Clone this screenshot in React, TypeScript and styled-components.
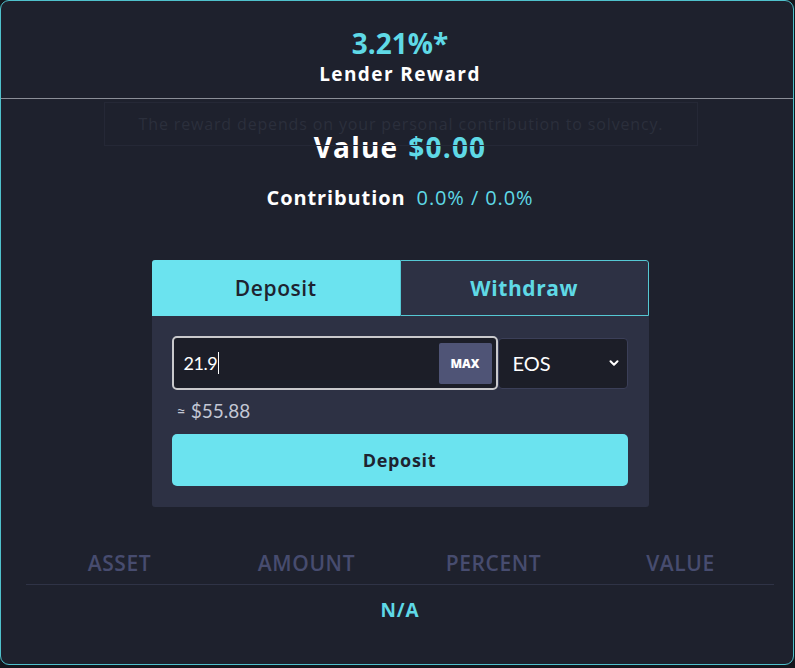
import * as React from "react";
import styled, { createGlobalStyle } from "styled-components";

const Global = createGlobalStyle`
    html, body {
        margin: 0;
        padding: 0;
        background: #14161d;
    }
    body {
        font-family: "Open Sans", "Liberation Sans", sans-serif;
        color: #ffffff;
    }
`;

const Card = styled.div`
    position: relative;
    box-sizing: border-box;
    width: 794px;
    height: 665px;
    padding-left: 6px;
    background: #1e212d;
    border: 1px solid #4fc1cc;
    border-radius: 9px;
    display: flex;
    flex-direction: column;
    align-items: center;
`;

const Header = styled.div`
    box-sizing: border-box;
    width: calc(100% + 6px);
    margin-left: -6px;
    padding-left: 6px;
    height: 98px;
    padding-top: 24px;
    border-bottom: 1px solid #8b8e97;
    display: flex;
    flex-direction: column;
    align-items: center;
`;

const Rate = styled.div`
    font-size: 28px;
    font-weight: 700;
    line-height: 36px;
    color: #5fd9e6;
`;

const HeaderLabel = styled.div`
    font-size: 19px;
    font-weight: 700;
    line-height: 26px;
    letter-spacing: 1.4px;
`;

// tooltip fading out over the value line
const Tooltip = styled.div`
    position: absolute;
    left: 103px;
    top: 101px;
    width: 594px;
    height: 44px;
    box-sizing: border-box;
    border: 1px solid #252836;
    display: flex;
    align-items: center;
    justify-content: center;
    font-size: 16px;
    letter-spacing: 0.85px;
    color: #2b2f3c;
`;

const ValueLine = styled.div`
    margin-top: 30px;
    font-size: 28px;
    font-weight: 700;
    line-height: 36px;
    letter-spacing: 1.2px;
    display: flex;
    gap: 10px;
`;

const Accent = styled.span<{ $weight?: number }>`
    color: #5fd9e6;
    font-weight: ${(p) => p.$weight ?? 700};
`;

const ContributionLine = styled.div`
    margin-top: 19px;
    font-size: 20px;
    font-weight: 700;
    line-height: 28px;
    letter-spacing: 0.9px;
    display: flex;
    gap: 11px;
`;

const Panel = styled.div`
    margin-top: 48px;
    width: 497px;
    background: #2d3144;
    border-radius: 3px;
    overflow: hidden;
`;

const Tabs = styled.div`
    display: grid;
    grid-template-columns: 1fr 1fr;
    height: 56px;
`;

const Tab = styled.div<{ $active?: boolean }>`
    display: flex;
    align-items: center;
    justify-content: center;
    font-size: 21px;
    letter-spacing: 0.6px;
    font-weight: ${(p) => (p.$active ? 600 : 700)};
    background: ${(p) => (p.$active ? "#6be3ef" : "#2d3144")};
    color: ${(p) => (p.$active ? "#1e2330" : "#5fd9e6")};
    border: ${(p) => (p.$active ? "none" : "1px solid #55c8d4")};
    border-radius: ${(p) => (p.$active ? "0" : "0 3px 0 0")};
`;

const Body = styled.div`
    padding: 20px 21px 21px 20px;
    display: flex;
    flex-direction: column;
`;

const InputRow = styled.div`
    display: flex;
    align-items: center;
`;

const AmountBox = styled.div`
    box-sizing: border-box;
    width: 326px;
    height: 54px;
    background: #1c1e28;
    border: 2px solid #c9c9cc;
    border-radius: 5px;
    display: flex;
    align-items: center;
    padding: 0 4px 0 10px;
`;

const AmountText = styled.span`
    flex: 1;
    font-family: Lato, "Liberation Sans", sans-serif;
    font-size: 18px;
    color: #ffffff;
    display: flex;
    align-items: center;
    letter-spacing: -0.5px;
`;

const Caret = styled.span`
    width: 1px;
    height: 22px;
    background: #ffffff;
    margin-left: 1px;
`;

const MaxButton = styled.div`
    width: 53px;
    height: 41px;
    border-radius: 2px;
    background: #4f5476;
    display: flex;
    align-items: center;
    justify-content: center;
    font-size: 12px;
    font-weight: 800;
    color: #ffffff;
`;

const Select = styled.div`
    box-sizing: border-box;
    width: 130px;
    height: 51px;
    background: #1c1e28;
    border: 1px solid #3b3f58;
    border-radius: 4px;
    display: flex;
    align-items: center;
    justify-content: space-between;
    padding: 0 6px 0 14px;
    font-family: Lato, "Liberation Sans", sans-serif;
    font-size: 20px;
    color: #ffffff;
`;

const Approx = styled.div`
    margin-top: 9px;
    padding-left: 5px;
    font-family: Lato, "Liberation Sans", sans-serif;
    font-size: 19px;
    color: #c3c7d4;
    line-height: 24px;
    display: flex;
    align-items: center;
    gap: 5px;
`;

const Tilde = styled.span`
    font-size: 16px;
`;

const ActionButton = styled.div`
    margin-top: 11px;
    height: 52px;
    border-radius: 5px;
    background: #6be3ef;
    display: flex;
    align-items: center;
    justify-content: center;
    font-size: 18px;
    letter-spacing: 0.7px;
    font-weight: 700;
    color: #1e2330;
`;

const Table = styled.div`
    margin-top: 35px;
    width: 748px;
`;

const TableHead = styled.div`
    display: grid;
    grid-template-columns: repeat(4, 1fr);
    height: 42px;
    align-items: center;
    border-bottom: 1px solid #2f3346;
`;

const HeadCell = styled.div`
    text-align: center;
    font-size: 21px;
    font-weight: 600;
    color: #474c6f;
    letter-spacing: 0.6px;
`;

const Empty = styled.div`
    text-align: center;
    margin-top: 12px;
    font-size: 19px;
    font-weight: 700;
    letter-spacing: 0.8px;
    color: #5fd9e6;
`;

const Chevron = () => (
    <svg width="14" height="14" viewBox="0 0 24 24" fill="none" stroke="#ffffff" strokeWidth="3.5" strokeLinecap="round" strokeLinejoin="round">
        <polyline points="6 9 12 15 18 9" />
    </svg>
);

export default function App() {
    return (
        <>
            <Global />
            <Card>
                <Header>
                    <Rate>3.21%*</Rate>
                    <HeaderLabel>Lender Reward</HeaderLabel>
                </Header>
                <Tooltip>The reward depends on your personal contribution to solvency.</Tooltip>

                <ValueLine>
                    <span>Value</span>
                    <Accent>$0.00</Accent>
                </ValueLine>
                <ContributionLine>
                    <span>Contribution</span>
                    <Accent $weight={500}>0.0% / 0.0%</Accent>
                </ContributionLine>

                <Panel>
                    <Tabs>
                        <Tab $active>Deposit</Tab>
                        <Tab>Withdraw</Tab>
                    </Tabs>
                    <Body>
                        <InputRow>
                            <AmountBox>
                                <AmountText>
                                    21.9<Caret />
                                </AmountText>
                                <MaxButton>MAX</MaxButton>
                            </AmountBox>
                            <Select>
                                <span>EOS</span>
                                <Chevron />
                            </Select>
                        </InputRow>
                        <Approx>
                            <Tilde>≈</Tilde>$55.88
                        </Approx>
                        <ActionButton>Deposit</ActionButton>
                    </Body>
                </Panel>

                <Table>
                    <TableHead>
                        <HeadCell>ASSET</HeadCell>
                        <HeadCell>AMOUNT</HeadCell>
                        <HeadCell>PERCENT</HeadCell>
                        <HeadCell>VALUE</HeadCell>
                    </TableHead>
                    <Empty>N/A</Empty>
                </Table>
            </Card>
        </>
    );
}
